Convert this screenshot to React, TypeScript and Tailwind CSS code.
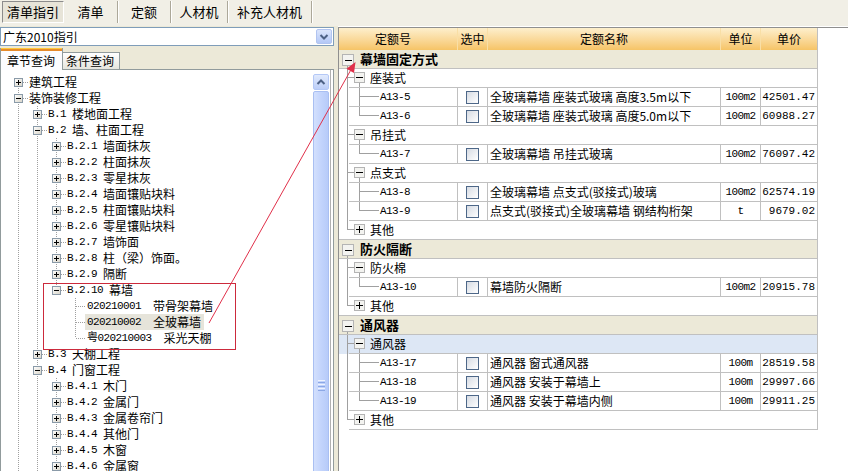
import React from "react";

type TNode = { l: number; code?: string; name: string; exp?: "+" | "-"; sel?: boolean };

const treeNodes: TNode[] = [
  { l: 0, name: "建筑工程", exp: "+" },
  { l: 0, name: "装饰装修工程", exp: "-" },
  { l: 1, code: "B.1", name: "楼地面工程", exp: "+" },
  { l: 1, code: "B.2", name: "墙、柱面工程", exp: "-" },
  { l: 2, code: "B.2.1", name: "墙面抹灰", exp: "+" },
  { l: 2, code: "B.2.2", name: "柱面抹灰", exp: "+" },
  { l: 2, code: "B.2.3", name: "零星抹灰", exp: "+" },
  { l: 2, code: "B.2.4", name: "墙面镶贴块料", exp: "+" },
  { l: 2, code: "B.2.5", name: "柱面镶贴块料", exp: "+" },
  { l: 2, code: "B.2.6", name: "零星镶贴块料", exp: "+" },
  { l: 2, code: "B.2.7", name: "墙饰面", exp: "+" },
  { l: 2, code: "B.2.8", name: "柱（梁）饰面。", exp: "+" },
  { l: 2, code: "B.2.9", name: "隔断", exp: "+" },
  { l: 2, code: "B.2.10", name: "幕墙", exp: "-" },
  { l: 3, code: "020210001", name: "带骨架幕墙" },
  { l: 3, code: "020210002", name: "全玻幕墙", sel: true },
  { l: 3, code: "粤020210003", name: "采光天棚" },
  { l: 1, code: "B.3", name: "天棚工程", exp: "+" },
  { l: 1, code: "B.4", name: "门窗工程", exp: "-" },
  { l: 2, code: "B.4.1", name: "木门", exp: "+" },
  { l: 2, code: "B.4.2", name: "金属门", exp: "+" },
  { l: 2, code: "B.4.3", name: "金属卷帘门", exp: "+" },
  { l: 2, code: "B.4.4", name: "其他门", exp: "+" },
  { l: 2, code: "B.4.5", name: "木窗", exp: "+" },
  { l: 2, code: "B.4.6", name: "金属窗", exp: "+" },
];

function hasNext(i: number): boolean {
  const L = treeNodes[i].l;
  for (let j = i + 1; j < treeNodes.length; j++) {
    if (treeNodes[j].l < L) return false;
    if (treeNodes[j].l === L) return true;
  }
  return true;
}

function ancestorIndex(i: number, level: number): number {
  for (let j = i - 1; j >= 0; j--) if (treeNodes[j].l === level) return j;
  return -1;
}

const DOT = { stroke: "#a0a0a0", strokeDasharray: "1 1" };

function PassCell({ on }: { on: boolean }) {
  return (
    <svg width={19} height={16} className="shrink-0">
      {on && <line x1={9.5} y1={0} x2={9.5} y2={16} {...DOT} />}
    </svg>
  );
}

function OwnCell({ top, bottom, exp }: { top: boolean; bottom: boolean; exp?: "+" | "-" }) {
  return (
    <svg width={19} height={16} className="shrink-0">
      {top && <line x1={9.5} y1={0} x2={9.5} y2={8} {...DOT} />}
      {bottom && <line x1={9.5} y1={8} x2={9.5} y2={16} {...DOT} />}
      <line x1={10} y1={8.5} x2={19} y2={8.5} {...DOT} />
      {exp && (
        <g>
          <defs>
            <linearGradient id="tb" x1="0" y1="0" x2="1" y2="1">
              <stop offset="0" stopColor="#ffffff" />
              <stop offset="1" stopColor="#d8d4c8" />
            </linearGradient>
          </defs>
          <rect x={5.5} y={4.5} width={8} height={8} fill="url(#tb)" stroke="#8a9aa8" />
          <line x1={7} y1={8.5} x2={12} y2={8.5} stroke="#000" />
          {exp === "+" && <line x1={9.5} y1={6} x2={9.5} y2={11} stroke="#000" />}
        </g>
      )}
    </svg>
  );
}

function TreeRow({ i }: { i: number }) {
  const n = treeNodes[i];
  const cells: React.ReactNode[] = [];
  for (let k = 0; k < n.l; k++) {
    const a = ancestorIndex(i, k);
    cells.push(<PassCell key={k} on={a >= 0 && hasNext(a)} />);
  }
  cells.push(<OwnCell key="own" top={i !== 0} bottom={hasNext(i)} exp={n.exp} />);
  const mono = "font-['Liberation_Mono','Noto_Sans_CJK_SC',monospace] text-[11px] tracking-[-0.6px]";
  return (
    <div className="flex h-[16px] items-center whitespace-nowrap">
      {cells}
      {n.l === 3 ? (
        <span className={`flex h-[16px] items-center pl-[2px] pr-[3px] leading-[16px] ${n.sel ? "bg-[#e6e4da]" : ""}`}>
          <span className={mono}>{n.code}</span>
          <span className="ml-[12px]">{n.name}</span>
        </span>
      ) : (
        <span className="ml-[1px] flex items-center leading-[16px]">
          {n.code && <span className={`${mono} mr-[6px]`}>{n.code}</span>}
          <span>{n.name}</span>
        </span>
      )}
    </div>
  );
}

function TopBar() {
  const tab = "h-[22px] flex items-center justify-center text-[13px] border-r border-[#aca899] shadow-[1px_0_0_#ffffff]";
  return (
    <div className="h-[26px] flex items-start pt-[1px] bg-[#f1efe6]">
      <div className="ml-[2px] w-[62px] h-[22px] flex items-center justify-center text-[13px] border border-t-[#8c8c8c] border-l-[#8c8c8c] border-r-white border-b-white bg-[#e7e4d8]">
        清单指引
      </div>
      <div className={`${tab} w-[54px]`}>清单</div>
      <div className={`${tab} w-[53px]`}>定额</div>
      <div className={`${tab} w-[57px]`}>人材机</div>
      <div className={`${tab} w-[84px]`}>补充人材机</div>
    </div>
  );
}

function LeftPanel() {
  return (
    <div className="w-[334px] flex flex-col bg-[#ece9d8]">
      <div className="mt-[1px] h-[19px] flex items-center border border-[#7f9db9] bg-white">
        <span className="flex-1 pl-[2px] leading-[16px]">广东2010指引</span>
        <div className="mr-[1px] w-[16px] h-[15px] rounded-[2px] border border-[#b1c4f0] bg-gradient-to-b from-[#dbe5fc] to-[#b4c8f6] flex items-center justify-center">
          <svg width={10} height={8}>
            <path d="M1.5 2 L5 5.5 L8.5 2" fill="none" stroke="#4d6185" strokeWidth={2} />
          </svg>
        </div>
      </div>
      <div className="mt-[2px] h-[21px] flex items-end">
        <div className="relative z-10 -mb-px h-[22px] w-[63px] border-x border-[#919b9c] bg-[#fcfcfe] flex flex-col">
          <div className="h-[3px] bg-[#e68b2c] border-t border-[#ffc83c]" />
          <div className="flex-1 flex items-center pl-[6px] leading-[16px]">章节查询</div>
        </div>
        <div className="h-[17px] w-[57px] border-t border-r border-[#919b9c] bg-gradient-to-b from-white to-[#e6e5dd] flex items-center pl-[3px] leading-[16px]">
          条件查询
        </div>
      </div>
      <div className="flex-1 min-h-0 flex border-x border-t border-[#919b9c] bg-white overflow-hidden">
        <div className="flex-1 pt-[4px] pl-[8px] overflow-hidden">
          {treeNodes.map((_, i) => (
            <TreeRow key={i} i={i} />
          ))}
        </div>
        <div className="w-[16px] flex flex-col pt-[4px] overflow-hidden">
          <div className="h-[16px] shrink-0 rounded-[2px] border border-[#b4c8f6] bg-gradient-to-b from-[#e1eafd] to-[#bccef8] flex items-center justify-center">
            <svg width={10} height={8}>
              <path d="M1.5 6 L5 2.5 L8.5 6" fill="none" stroke="#4d6185" strokeWidth={2} />
            </svg>
          </div>
          <div className="mt-[1px] h-[588px] shrink-0 rounded-[2px] border border-[#a9bff2] bg-gradient-to-r from-[#d3e0fd] via-[#c3d4fc] to-[#b7cbf9] flex items-center justify-center">
            <div className="flex flex-col gap-[1px]">
              <div className="w-[7px] h-[1px] bg-[#eef3fe]" />
              <div className="w-[7px] h-[1px] bg-[#8ca8e6]" />
              <div className="w-[7px] h-[1px] bg-[#eef3fe]" />
              <div className="w-[7px] h-[1px] bg-[#8ca8e6]" />
              <div className="w-[7px] h-[1px] bg-[#eef3fe]" />
              <div className="w-[7px] h-[1px] bg-[#8ca8e6]" />
            </div>
          </div>
        </div>
        <div className="w-[1px]" />
        <div className="w-[3px] border-l border-[#b0b0b0]" />
      </div>
    </div>
  );
}

type RRow =
  | { t: "group"; label: string }
  | { t: "sub"; label: string; open: boolean; last: boolean; sel?: boolean; nextGroup?: boolean }
  | { t: "leaf"; code: string; name: string; unit: string; price: string; last: boolean };

const rrows: RRow[] = [
  { t: "group", label: "幕墙固定方式" },
  { t: "sub", label: "座装式", open: true, last: false },
  { t: "leaf", code: "A13-5", name: "全玻璃幕墙 座装式玻璃 高度3.5m以下", unit: "100m2", price: "42501.47", last: false },
  { t: "leaf", code: "A13-6", name: "全玻璃幕墙 座装式玻璃 高度5.0m以下", unit: "100m2", price: "60988.27", last: true },
  { t: "sub", label: "吊挂式", open: true, last: false },
  { t: "leaf", code: "A13-7", name: "全玻璃幕墙 吊挂式玻璃", unit: "100m2", price: "76097.42", last: true },
  { t: "sub", label: "点支式", open: true, last: false },
  { t: "leaf", code: "A13-8", name: "全玻璃幕墙 点支式(驳接式)玻璃", unit: "100m2", price: "62574.19", last: false },
  { t: "leaf", code: "A13-9", name: "点支式(驳接式)全玻璃幕墙 钢结构桁架", unit: "t", price: "9679.02", last: true },
  { t: "sub", label: "其他", open: false, last: true, nextGroup: true },
  { t: "group", label: "防火隔断" },
  { t: "sub", label: "防火棉", open: true, last: false },
  { t: "leaf", code: "A13-10", name: "幕墙防火隔断", unit: "100m2", price: "20915.78", last: true },
  { t: "sub", label: "其他", open: false, last: true, nextGroup: true },
  { t: "group", label: "通风器" },
  { t: "sub", label: "通风器", open: true, last: false, sel: true },
  { t: "leaf", code: "A13-17", name: "通风器 窗式通风器", unit: "100m", price: "28519.58", last: false },
  { t: "leaf", code: "A13-18", name: "通风器 安装于幕墙上", unit: "100m", price: "29997.66", last: false },
  { t: "leaf", code: "A13-19", name: "通风器 安装于幕墙内侧", unit: "100m", price: "29911.25", last: true },
  { t: "sub", label: "其他", open: false, last: true },
];

const LINE = "#a0a0a0";

function Box({ x, y, w, h, plus }: { x: number; y: number; w: number; h: number; plus: boolean }) {
  const cx = x + Math.floor(w / 2) + 0.5;
  const cy = y + Math.floor(h / 2) + 0.5;
  return (
    <g>
      <rect x={x + 0.5} y={y + 0.5} width={w - 1} height={h - 1} fill="#f3f3f0" stroke="#b4b4b4" />
      <line x1={cx - 3.5} y1={cy} x2={cx + 3.5} y2={cy} stroke="#000" />
      {plus && <line x1={cx} y1={cy - 3.5} x2={cx} y2={cy + 3.5} stroke="#000" />}
    </g>
  );
}

function Strip({ half, horiz, bordered, sel }: { half: boolean; horiz: boolean; bordered: boolean; sel?: boolean }) {
  return (
    <div className={`w-[10px] shrink-0 ${bordered ? "border-b border-[#c0c0c0]" : ""} ${sel ? "bg-[#dde7f5]" : ""}`}>
      <svg width={10} height={bordered ? 18 : 19} className="block">
        <line x1={8.5} y1={0} x2={8.5} y2={half ? 9 : 19} stroke={LINE} />
        {horiz && <line x1={8.5} y1={8.5} x2={10} y2={8.5} stroke={LINE} />}
      </svg>
    </div>
  );
}

const monoSm = "font-['Liberation_Mono','Noto_Sans_CJK_SC',monospace] text-[11px] tracking-[-0.6px]";
const monoNum = "font-['Liberation_Mono','Noto_Sans_CJK_SC',monospace] text-[11px]";

function RightRow({ r }: { r: RRow }) {
  if (r.t === "group") {
    return (
      <div className="flex h-[19px] items-start bg-[#ece9d8] border-b border-[#c0c0c0]">
        <svg width={12} height={18} className="ml-[3px] shrink-0 block">
          <Box x={0} y={4} w={12} h={12} plus={false} />
          <line x1={5.5} y1={16} x2={5.5} y2={18} stroke={LINE} />
        </svg>
        <span className="ml-[6px] h-[18px] flex items-center font-bold text-[13px] leading-[18px]">{r.label}</span>
      </div>
    );
  }
  if (r.t === "sub") {
    return (
      <div className="flex h-[19px]">
        <Strip half={r.last} horiz bordered={!!r.nextGroup} sel={r.sel} />
        <div className={`flex flex-1 items-center border-b border-[#c0c0c0] ${r.sel ? "bg-[#dde7f5]" : ""}`}>
          <svg width={20} height={18} className="shrink-0 block">
            <line x1={0} y1={8.5} x2={5} y2={8.5} stroke={LINE} />
            <Box x={5} y={3} w={11} h={11} plus={!r.open} />
            {r.open && <line x1={10.5} y1={14} x2={10.5} y2={18} stroke={LINE} />}
          </svg>
          <span className="ml-[1px] leading-[18px]">{r.label}</span>
        </div>
      </div>
    );
  }
  return (
    <div className="flex h-[19px]">
      <Strip half={false} horiz={false} bordered={false} />
      <div className="flex flex-1 border-b border-[#c0c0c0]">
        <div className="w-[109px] shrink-0 flex items-center border-r border-[#c0c0c0]">
          <svg width={30} height={18} className="shrink-0 block">
            <line x1={10.5} y1={0} x2={10.5} y2={r.last ? 9 : 18} stroke={LINE} />
            <line x1={10.5} y1={8.5} x2={30} y2={8.5} stroke={LINE} />
          </svg>
          <span className={`ml-[1px] ${monoSm}`}>{r.code}</span>
        </div>
        <div className="w-[30px] shrink-0 flex items-center justify-center border-r border-[#c0c0c0]">
          <div className="w-[13px] h-[13px] border border-[#4d6788] bg-gradient-to-br from-[#d6dbe3] to-white" />
        </div>
        <div className="w-[233px] shrink-0 flex items-center pl-[2px] border-r border-[#c0c0c0] whitespace-nowrap overflow-hidden leading-[18px]">
          {r.name}
        </div>
        <div className={`w-[40px] shrink-0 flex items-center justify-center border-r border-[#c0c0c0] ${monoSm}`}>{r.unit}</div>
        <div className={`w-[56px] shrink-0 flex items-center justify-end pr-[2px] ${monoNum}`}>{r.price}</div>
      </div>
    </div>
  );
}

function RightPanel() {
  const h = "h-[22px] shrink-0 flex items-center justify-center border-r border-[#f9dfa6]";
  return (
    <div className="flex-1 mt-[1px] border-l border-t border-[#8f8f8f] bg-white">
      <div className="w-[479px] border-r border-[#c0c0c0]">
        <div className="flex h-[22px] bg-gradient-to-b from-[#fdefcc] to-[#f6c466]">
          <div className={`${h} w-[119px] pr-[10px]`}>定额号</div>
          <div className={`${h} w-[30px]`}>选中</div>
          <div className={`${h} w-[233px]`}>定额名称</div>
          <div className={`${h} w-[40px]`}>单位</div>
          <div className="h-[22px] w-[56px] flex items-center justify-center">单价</div>
        </div>
        {rrows.map((r, i) => (
          <RightRow key={i} r={r} />
        ))}
      </div>
    </div>
  );
}

function Overlay() {
  return (
    <svg width={848} height={471} className="absolute left-0 top-0 pointer-events-none">
      <rect x={43.5} y={283.5} width={192} height={66} fill="none" stroke="#cc2a3c" />
      <line x1={209} y1={323} x2={350.5} y2={70.5} stroke="#e0304a" />
      <polygon points="355.5,62 354,73 346.5,68.8" fill="#e0304a" />
    </svg>
  );
}

export default function App() {
  return (
    <div className="relative w-[848px] h-[471px] overflow-hidden bg-white font-['Noto_Sans_CJK_SC','Liberation_Sans',sans-serif] text-[12px] text-black">
      <TopBar />
      <div className="flex h-[445px]">
        <LeftPanel />
        <div className="w-[4px] shrink-0 bg-[#ece9d8]" />
        <RightPanel />
      </div>
      <Overlay />
    </div>
  );
}
